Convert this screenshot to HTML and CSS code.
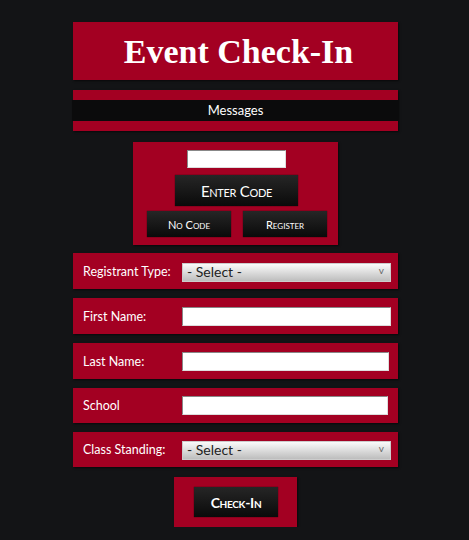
FILE: index.html
```html
<!DOCTYPE html>
<html lang="en">
<head>
    <meta charset="UTF-8">
    <meta name="viewport" content="width=device-width, initial-scale=1">
    <title>Event Check-In</title>
    <link rel="stylesheet" href="styles.css">
</head>
<body>
    <main class="page">
        <header class="title-box">
            <h1>Event Check-In</h1>
        </header>

        <div class="messages">
            <div class="messages-text">Messages</div>
        </div>

        <section class="code-box">
            <input type="text" class="code-input">
            <button class="btn btn-big">Enter Code</button>
            <div class="code-buttons">
                <button class="btn btn-small">No Code</button>
                <button class="btn btn-small">Register</button>
            </div>
        </section>

        <form class="fields">
            <div class="field">
                <label>Registrant Type:</label>
                <span class="select-wrap">
                    <select class="select"><option>- Select -</option></select>
                </span>
            </div>
            <div class="field">
                <label>First Name:</label>
                <input type="text" class="text-input">
            </div>
            <div class="field">
                <label>Last Name:</label>
                <input type="text" class="text-input narrow">
            </div>
            <div class="field short">
                <label>School</label>
                <input type="text" class="text-input narrower">
            </div>
            <div class="field short">
                <label>Class Standing:</label>
                <span class="select-wrap">
                    <select class="select"><option>- Select -</option></select>
                </span>
            </div>
        </form>

        <div class="checkin-box">
            <button class="btn btn-checkin">Check-In</button>
        </div>
    </main>
</body>
</html>
```

FILE: styles.css
```css
body {
    margin: 0;
    padding: 0 0 0 2px;
    background-color: #131416;
    font-family: Lato, 'Open Sans', sans-serif;
    color: white;
}
.page {
    width: 325px;
    margin: 0 auto;
    padding-top: 22px;
    display: flex;
    flex-direction: column;
    align-items: center;
}
.title-box, .messages, .code-box, .field, .checkin-box {
    background-color: #a30022;
    box-shadow: 1px 1px 2px rgba(0, 0, 0, 0.6);
}
.title-box {
    width: 100%;
    height: 58px;
    display: flex;
    align-items: center;
    justify-content: center;
}
.title-box h1 {
    margin: 0;
    font-family: 'Liberation Serif', serif;
    font-weight: bold;
    font-size: 34px;
    color: white;
    padding: 2px 0 0 6px;
}
.messages {
    width: 100%;
    margin-top: 10px;
    padding: 10px 0;
}
.messages-text {
    background-color: #0b0b0c;
    margin: 0 -1px;
    height: 21px;
    line-height: 21px;
    text-align: center;
    font-size: 13px;
}
.code-box {
    width: 205px;
    height: 103px;
    box-sizing: border-box;
    margin-top: 11px;
    padding-top: 8px;
    display: flex;
    flex-direction: column;
    align-items: center;
}
.code-input {
    width: 99px;
    height: 18px;
    box-sizing: border-box;
    border: 1px solid #888;
    border-bottom-color: #ddd;
    border-right-color: #ddd;
    background: white;
    margin: 0 0 7px 2px;
}
.btn {
    background: linear-gradient(#262626, #0a0a0a);
    border: none;
    color: white;
    font-family: Lato, 'Open Sans', sans-serif;
    font-variant: small-caps;
    box-shadow: 0 0 1px rgba(0, 0, 0, 0.8);
    padding: 0;
}
.btn-big {
    width: 123px;
    height: 31px;
    font-size: 15px;
    letter-spacing: -0.3px;
    margin-left: 2px;
}
.code-buttons {
    display: flex;
    gap: 12px;
    margin-top: 5px;
    margin-left: 3px;
}
.btn-small {
    width: 84px;
    height: 26px;
    font-size: 11px;
}
.fields {
    width: 100%;
    margin-top: 8px;
    display: flex;
    flex-direction: column;
    gap: 9px;
}
.field {
    height: 36px;
    display: flex;
    align-items: center;
    padding-left: 10px;
}
.field.short {
    height: 35px;
}
.field label {
    width: 99px;
    font-size: 12.5px;
}
.text-input {
    width: 209px;
    height: 19px;
    box-sizing: border-box;
    border: 1px solid #888;
    border-bottom-color: #ddd;
    border-right-color: #ddd;
    background: white;
}
.text-input.narrow {
    width: 207px;
}
.text-input.narrower {
    width: 206px;
}
.select-wrap {
    position: relative;
    display: block;
}
.select-wrap::after {
    content: "v";
    position: absolute;
    right: 7px;
    top: 3px;
    font-size: 10px;
    color: #666;
}
.select {
    appearance: none;
    -webkit-appearance: none;
    width: 209px;
    height: 19px;
    border: 1px solid #ccc;
    border-radius: 0;
    background: linear-gradient(#fafafa, #dcdcdc 50%, #bdbdbd);
    font-family: Lato, 'Open Sans', sans-serif;
    font-size: 14px;
    color: #222;
    padding: 0 0 2px 4px;
    line-height: 15px;
}
.checkin-box {
    width: 123px;
    height: 50px;
    box-sizing: border-box;
    margin-top: 10px;
    padding: 10px 0 0 20px;
}
.btn-checkin {
    width: 84px;
    height: 30px;
    font-size: 14px;
    font-weight: bold;
    letter-spacing: -0.3px;
}
```
